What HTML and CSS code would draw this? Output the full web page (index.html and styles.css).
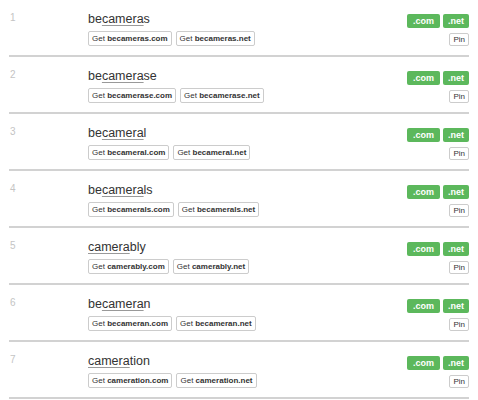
FILE: index.html
```html
<!DOCTYPE html>
<html lang="en">
<head>
  <meta charset="UTF-8" />
  <title>Domain names</title>
  <link rel="stylesheet" href="styles.css">
</head>
<body>
  <div class="list">

    <div class="row">
      <div class="num">1</div>
      <div class="main">
        <div class="name">be<span class="root">camera</span>s</div>
        <div class="gets">
          <button class="get">Get <b>becameras.com</b></button>
          <button class="get">Get <b>becameras.net</b></button>
        </div>
      </div>
      <div class="side">
        <div class="tlds"><span class="tld">.com</span><span class="tld">.net</span></div>
        <button class="pin">Pin</button>
      </div>
    </div>

    <div class="row">
      <div class="num">2</div>
      <div class="main">
        <div class="name">be<span class="root">camera</span>se</div>
        <div class="gets">
          <button class="get">Get <b>becamerase.com</b></button>
          <button class="get">Get <b>becamerase.net</b></button>
        </div>
      </div>
      <div class="side">
        <div class="tlds"><span class="tld">.com</span><span class="tld">.net</span></div>
        <button class="pin">Pin</button>
      </div>
    </div>

    <div class="row">
      <div class="num">3</div>
      <div class="main">
        <div class="name">be<span class="root">camera</span>l</div>
        <div class="gets">
          <button class="get">Get <b>becameral.com</b></button>
          <button class="get">Get <b>becameral.net</b></button>
        </div>
      </div>
      <div class="side">
        <div class="tlds"><span class="tld">.com</span><span class="tld">.net</span></div>
        <button class="pin">Pin</button>
      </div>
    </div>

    <div class="row">
      <div class="num">4</div>
      <div class="main">
        <div class="name">be<span class="root">camera</span>ls</div>
        <div class="gets">
          <button class="get">Get <b>becamerals.com</b></button>
          <button class="get">Get <b>becamerals.net</b></button>
        </div>
      </div>
      <div class="side">
        <div class="tlds"><span class="tld">.com</span><span class="tld">.net</span></div>
        <button class="pin">Pin</button>
      </div>
    </div>

    <div class="row">
      <div class="num">5</div>
      <div class="main">
        <div class="name"><span class="root">camera</span>bly</div>
        <div class="gets">
          <button class="get">Get <b>camerably.com</b></button>
          <button class="get">Get <b>camerably.net</b></button>
        </div>
      </div>
      <div class="side">
        <div class="tlds"><span class="tld">.com</span><span class="tld">.net</span></div>
        <button class="pin">Pin</button>
      </div>
    </div>

    <div class="row">
      <div class="num">6</div>
      <div class="main">
        <div class="name">be<span class="root">camera</span>n</div>
        <div class="gets">
          <button class="get">Get <b>becameran.com</b></button>
          <button class="get">Get <b>becameran.net</b></button>
        </div>
      </div>
      <div class="side">
        <div class="tlds"><span class="tld">.com</span><span class="tld">.net</span></div>
        <button class="pin">Pin</button>
      </div>
    </div>

    <div class="row">
      <div class="num">7</div>
      <div class="main">
        <div class="name"><span class="root">camera</span>tion</div>
        <div class="gets">
          <button class="get">Get <b>cameration.com</b></button>
          <button class="get">Get <b>cameration.net</b></button>
        </div>
      </div>
      <div class="side">
        <div class="tlds"><span class="tld">.com</span><span class="tld">.net</span></div>
        <button class="pin">Pin</button>
      </div>
    </div>

  </div>
</body>
</html>
```

FILE: styles.css
```css
body {
  margin: 0;
  font-family: "Liberation Sans", Arial, sans-serif;
  color: #333;
  background: #fff;
}
.list {
  padding: 0 9px;
}
.row {
  display: flex;
  padding: 10px 0 9px;
  border-bottom: 2px solid #d2d2d2;
}
.num {
  width: 79px;
  padding-left: 1px;
  box-sizing: border-box;
  font-size: 10px;
  line-height: 16px;
  color: #c4c4c4;
}
.main {
  flex: 1;
}
.name {
  font-size: 12.5px;
  line-height: 18px;
  color: #333;
}
.root {
  text-decoration: underline;
  text-decoration-color: #999;
  text-underline-offset: 2px;
}
.gets {
  display: flex;
  gap: 4px;
  margin-top: 3px;
}
.get, .pin {
  margin: 0;
  font-family: inherit;
  font-size: 8px;
  color: #333;
  background: #fff;
  border: 1px solid #ccc;
  border-radius: 2px;
  padding: 0 3px;
  height: 15px;
  line-height: 13px;
  cursor: pointer;
}
.get b {
  font-weight: bold;
}
.side {
  display: flex;
  flex-direction: column;
  align-items: flex-end;
  padding-top: 4px;
}
.tlds {
  display: flex;
  gap: 3px;
}
.tld {
  background: #5cb85c;
  color: #fff;
  font-size: 9px;
  font-weight: bold;
  line-height: 14px;
  height: 14px;
  padding: 0 5px;
  border-radius: 2px;
}
.tld:first-child {
  padding: 0 6px;
}
.pin {
  margin-top: 5px;
  height: 13px;
  line-height: 11px;
  padding: 0 3px;
}
```
